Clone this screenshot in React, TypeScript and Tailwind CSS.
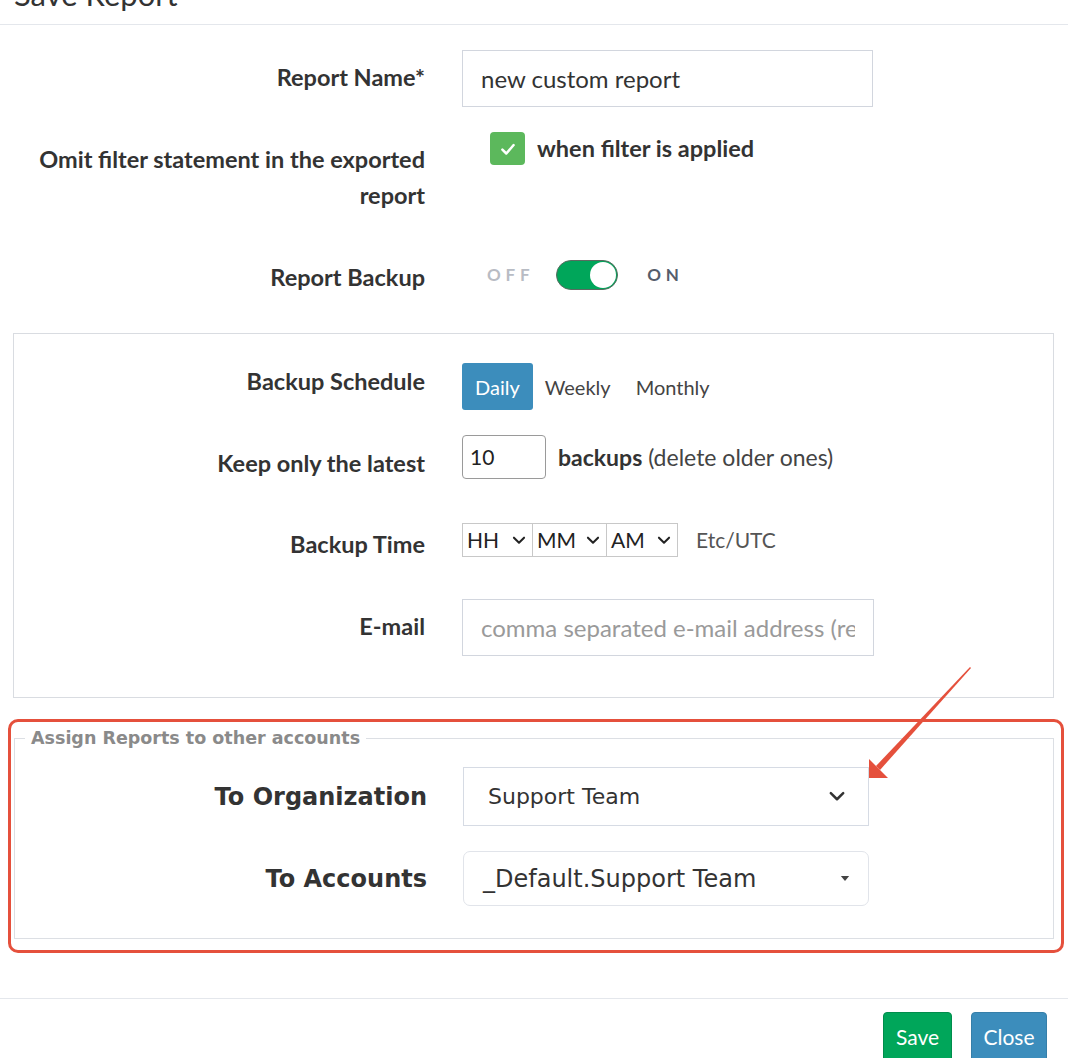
const SANS = { fontFamily: "Lato, 'Open Sans', sans-serif" };
const VERD = { fontFamily: "'DejaVu Sans', Verdana, sans-serif" };

function Chevron({ className }: { className?: string }) {
  return (
    <svg viewBox="0 0 12 8" className={className} fill="none">
      <path d="M1.5 1.5 6 6l4.5-4.5" stroke="currentColor" strokeWidth="1.8" strokeLinecap="round" strokeLinejoin="round" />
    </svg>
  );
}

function TimeSelect({ value, w, last }: { value: string; w: string; last?: boolean }) {
  return (
    <div className={`flex h-full items-center justify-between px-[4px] text-[21px] text-[#222] ${w} ${last ? "" : "border-r border-[#c8c8c8]"}`}>
      <span>{value}</span>
      <Chevron className="mr-[2px] h-[9px] w-[14px] text-[#222]" />
    </div>
  );
}

function Label({ children, w, pt }: { children: React.ReactNode; w: string; pt: string }) {
  return <div className={`${w} ${pt} text-right text-[23.5px] font-bold leading-[28px] text-[#333]`}>{children}</div>;
}

export default function App() {
  return (
    <div style={SANS} className="relative min-h-[1058px] w-[1068px] overflow-hidden bg-white text-[#333]">
      {/* header, cut off at the top */}
      <div className="h-[25px] overflow-hidden border-b border-[#e4e7ec]">
        <div className="-mt-[25px] pl-[14px] text-[31px] leading-[38px] text-[#333]">Save Report</div>
      </div>

      {/* report name */}
      <div className="mt-[25px] flex items-start">
        <Label w="w-[425px]" pt="pt-[13px]">Report Name*</Label>
        <div className="ml-[37px] flex h-[57px] w-[411px] items-center border border-[#d2d6de] px-[18px] text-[24px] text-[#333]">
          new custom report
        </div>
      </div>

      {/* omit filter */}
      <div className="mt-[24px] flex items-start">
        <div className="w-[425px] pt-[10px] text-right text-[23.5px] font-bold leading-[36px]">
          Omit filter statement in the exported
          <br />
          report
        </div>
        <div className="ml-[65px] flex items-center gap-[12px]">
          <span className="flex h-[33px] w-[35px] items-center justify-center rounded-[4px] bg-[#5cb85c]">
            <svg viewBox="0 0 16 16" className="h-[18px] w-[18px]" fill="none">
              <path d="M3 8.5 6.5 12 13 4.5" stroke="white" strokeWidth="2.2" strokeLinecap="round" strokeLinejoin="round" />
            </svg>
          </span>
          <span className="text-[23.5px] font-bold text-[#333]">when filter is applied</span>
        </div>
      </div>

      {/* report backup */}
      <div className="mt-[47px] flex items-start">
        <Label w="w-[425px]" pt="pt-[3px]">Report Backup</Label>
        <div className="ml-[62px] flex h-[30px] items-center">
          <span className="text-[17px] font-bold tracking-[0.28em] text-[#b8bcc4]">OFF</span>
          <span className="ml-[22px] flex h-[30px] w-[62px] items-center justify-end rounded-full border border-[#5a6a60] bg-[#00a65a] px-[1px]">
            <span className="h-[26px] w-[26px] rounded-full bg-white" />
          </span>
          <span className="ml-[29px] text-[17px] font-bold tracking-[0.28em] text-[#555d6b]">ON</span>
        </div>
      </div>

      {/* backup settings box */}
      <div className="ml-[13px] mt-[42px] w-[1041px] border border-[#d9dce1] pb-[41px] pt-[29px]">
        <div className="flex items-start">
          <Label w="w-[411px]" pt="pt-[4px]">Backup Schedule</Label>
          <div className="ml-[37px] flex h-[47px] items-center text-[20px]">
            <span className="flex h-full items-center rounded-[3px] bg-[#3c8dbc] px-[13px] text-white">Daily</span>
            <span className="ml-[12px] text-[#444]">Weekly</span>
            <span className="ml-[25px] text-[#444]">Monthly</span>
          </div>
        </div>

        <div className="mt-[25px] flex items-start">
          <Label w="w-[411px]" pt="pt-[14px]">Keep only the latest</Label>
          <div className="ml-[37px] flex h-[44px] items-center">
            <span className="flex h-full w-[84px] items-center rounded-[4px] border border-[#9a9a9a] px-[7px] text-[21px] text-[#222]">10</span>
            <span className="ml-[12px] text-[23px] text-[#444]">
              <b className="text-[#333]">backups</b> (delete older ones)
            </span>
          </div>
        </div>

        <div className="mt-[44px] flex items-start">
          <Label w="w-[411px]" pt="pt-[7px]">Backup Time</Label>
          <div className="ml-[37px] flex h-[34px] items-center">
            <div className="flex h-full border border-[#c8c8c8]">
              <TimeSelect value="HH" w="w-[70px]" />
              <TimeSelect value="MM" w="w-[74px]" />
              <TimeSelect value="AM" w="w-[70px]" last />
            </div>
            <span className="ml-[18px] text-[21px] text-[#555]">Etc/UTC</span>
          </div>
        </div>

        <div className="mt-[41px] flex items-start">
          <Label w="w-[411px]" pt="pt-[13px]">E-mail</Label>
          <div className="ml-[37px] flex h-[57px] w-[412px] items-center border border-[#d2d6de] px-[18px]">
            <div className="overflow-hidden whitespace-nowrap text-[24px] text-[#9a9a9a]">comma separated e-mail address (required)</div>
          </div>
        </div>
      </div>

      {/* assign reports, outlined in red */}
      <div className="ml-[8px] mt-[21px] w-[1056px] rounded-[10px] border-[3px] border-[#e5503c] pb-[11px] pl-[3px] pr-[7px] pt-[5px]">
        <fieldset style={VERD} className="border border-[#dcdfe4] pb-[32px]">
          <legend className="ml-[10px] px-[6px] text-[17.5px] font-bold leading-[22px] text-[#8a8a8a]">
            Assign Reports to other accounts
          </legend>
          <div className="mt-[18px] flex items-center">
            <div className="w-[412px] text-right text-[24px] font-bold text-[#333]">To Organization</div>
            <div className="ml-[36px] flex h-[59px] w-[406px] items-center justify-between border border-[#d6dbe4] pl-[24px] pr-[22px] text-[22px] text-[#333]">
              <span>Support Team</span>
              <Chevron className="h-[11px] w-[18px] text-[#333]" />
            </div>
          </div>
          <div className="mt-[25px] flex items-center">
            <div className="w-[412px] text-right text-[24px] font-bold text-[#333]">To Accounts</div>
            <div className="ml-[36px] flex h-[55px] w-[406px] items-center justify-between rounded-[7px] border border-[#e1e4ea] pl-[19px] pr-[18px] text-[24px] text-[#333]">
              <span>_Default.Support Team</span>
              <svg viewBox="0 0 10 6" className="h-[5px] w-[10px]"><path d="M0 0h10L5 6z" fill="#444" /></svg>
            </div>
          </div>
        </fieldset>
      </div>

      {/* footer */}
      <div className="mt-[45px] flex justify-end gap-[19px] border-t border-[#e4e7ec] pr-[21px] pt-[13px]">
        <span className="flex h-[50px] w-[69px] items-center justify-center rounded-[4px] border border-[#008d4c] bg-[#00a65a] text-[21px] text-white">Save</span>
        <span className="flex h-[50px] w-[76px] items-center justify-center rounded-[4px] border border-[#367fa9] bg-[#3c8dbc] text-[21px] text-white">Close</span>
      </div>

      {/* annotation arrow */}
      <svg className="pointer-events-none absolute left-0 top-0" width="1068" height="1058">
        <polygon points="970,667 971,668 880,770 876,766" fill="#e5503c" />
        <polygon points="869,778 869,759 888,778" fill="#e5503c" />
      </svg>
    </div>
  );
}
